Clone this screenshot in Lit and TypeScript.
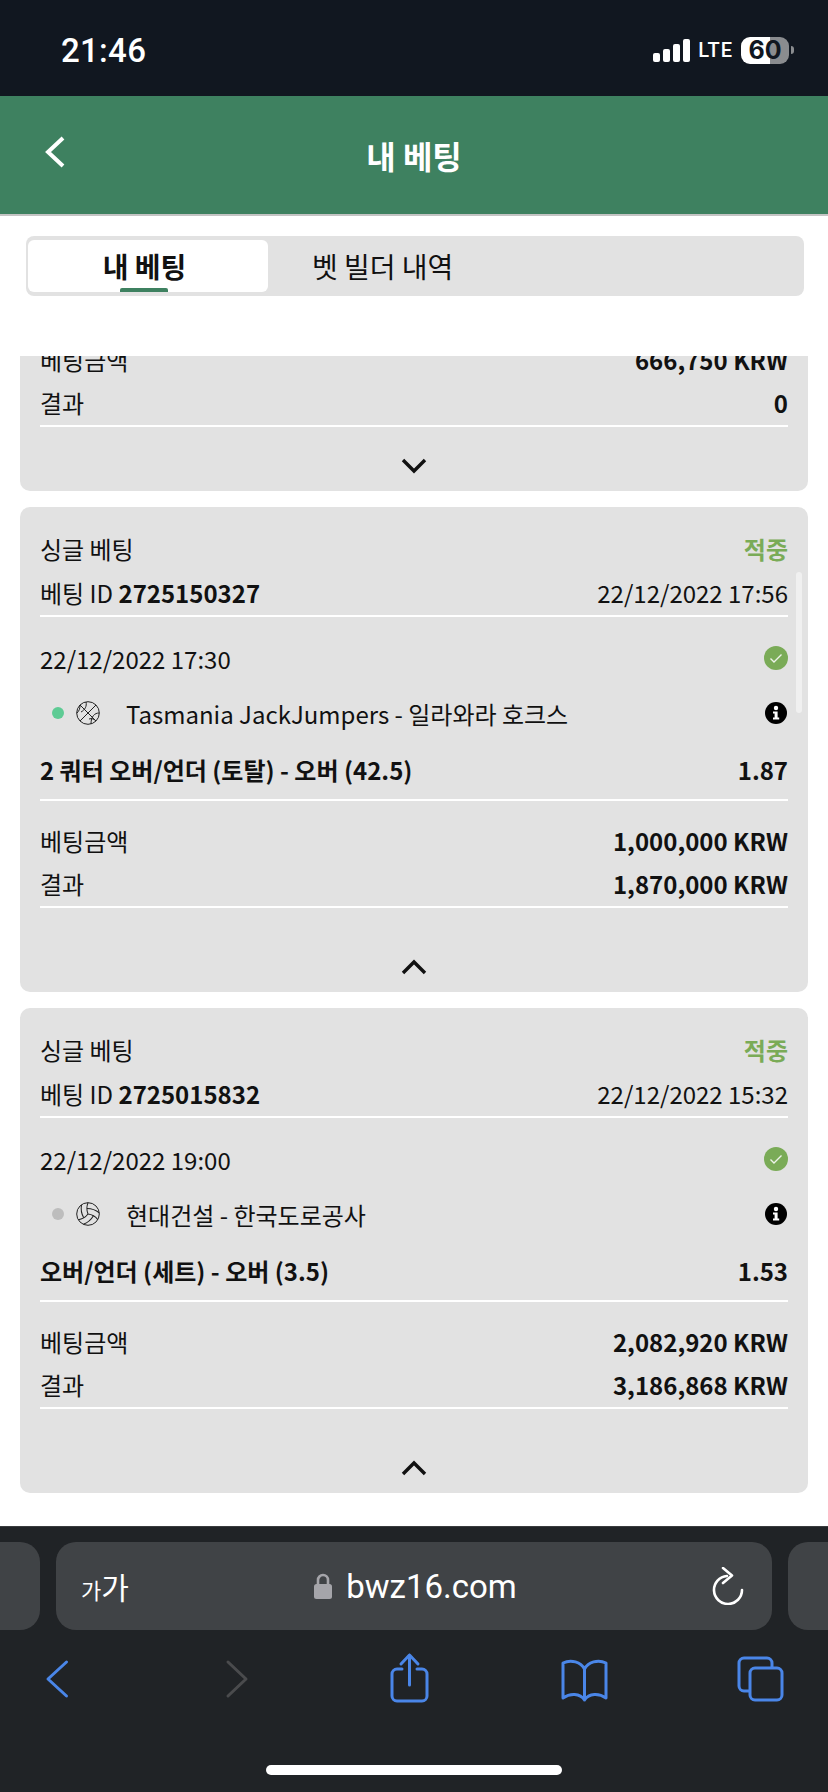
import { LitElement, html, css, svg } from 'lit';
import { customElement } from 'lit/decorators.js';
import { classMap } from 'lit/directives/class-map.js';

interface Bet {
  id: string;
  placed: string;
  date: string;
  live: boolean;
  sport: 'basket' | 'volley';
  match: string;
  market: string;
  odds: string;
  stake: string;
  result: string;
}

const BETS: Bet[] = [
  {
    id: '2725150327',
    placed: '22/12/2022 17:56',
    date: '22/12/2022 17:30',
    live: true,
    sport: 'basket',
    match: 'Tasmania JackJumpers - 일라와라 호크스',
    market: '2 쿼터 오버/언더 (토탈) - 오버 (42.5)',
    odds: '1.87',
    stake: '1,000,000 KRW',
    result: '1,870,000 KRW',
  },
  {
    id: '2725015832',
    placed: '22/12/2022 15:32',
    date: '22/12/2022 19:00',
    live: false,
    sport: 'volley',
    match: '현대건설 - 한국도로공사',
    market: '오버/언더 (세트) - 오버 (3.5)',
    odds: '1.53',
    stake: '2,082,920 KRW',
    result: '3,186,868 KRW',
  },
];

const basket = svg`
  <circle cx="12" cy="12" r="11.3" />
  <path d="M4 4 L20 20 M20 4 L4 20" />
  <path d="M10 1 C11 5 9 9 5 11 M1 12 C3 10 4 8 4 4" />
  <path d="M23 12 C19 12 15 15 15 23 M20 20 C18 18 16 17 13 18" />
`;

const volley = svg`
  <circle cx="12" cy="12" r="11.3" />
  <g transform="translate(12 12) scale(1.13) translate(-12 -12)" stroke-width="0.9">
    <path d="M11.1 7.1a16.55 16.55 0 0 1 10.9 4" />
    <path d="M12 12a12.6 12.6 0 0 1-8.7 5" />
    <path d="M16.8 13.6a16.55 16.55 0 0 1-9 7.5" />
    <path d="M20.7 17a12.8 12.8 0 0 0-8.7-5 13.3 13.3 0 0 1 0-10" />
    <path d="M6.3 3.8a16.55 16.55 0 0 0 1.9 11.5" />
  </g>
`;

@customElement('app-root')
export class AppRoot extends LitElement {
  static styles = css`
    :host {
      display: flex;
      flex-direction: column;
      width: 828px;
      height: 1792px;
      overflow: hidden;
      background: #fff;
      color: #111;
      font-family: 'Noto Sans CJK KR', 'Noto Sans', sans-serif;
      font-size: 24px;
    }

    .status {
      flex: none;
      height: 96px;
      background: #111720;
      color: #fff;
      display: flex;
      align-items: center;
      padding: 4px 34px 0 61px;
      box-sizing: border-box;
      justify-content: space-between;
    }
    .time {
      font: 500 33px Roboto, sans-serif;
      letter-spacing: 0.3px;
    }
    .status-right {
      display: flex;
      align-items: center;
    }
    .signal {
      display: flex;
      align-items: flex-end;
      gap: 3px;
      height: 23px;
      margin-right: 8px;
    }
    .signal i {
      display: block;
      width: 7px;
      background: #fff;
      border-radius: 2px;
    }
    .signal i:nth-child(1) { height: 9px; }
    .signal i:nth-child(2) { height: 13px; }
    .signal i:nth-child(3) { height: 18px; }
    .signal i:nth-child(4) { height: 23px; }
    .lte {
      font: 500 20px Roboto, sans-serif;
      letter-spacing: 1px;
      margin-right: 8px;
    }
    .battery {
      width: 48px;
      height: 27px;
      border-radius: 9px;
      background: linear-gradient(90deg, #fff 60%, #8a8c8f 60%);
      color: #111720;
      font: 700 25px Inter, sans-serif;
      display: flex;
      align-items: center;
      justify-content: center;
    }
    .nub {
      width: 3px;
      height: 8px;
      margin-left: 2px;
      background: #8a8c8f;
      border-radius: 0 3px 3px 0;
    }

    .header {
      flex: none;
      height: 118px;
      background: #3e8160;
      border-bottom: 2px solid #c4c4c4;
      color: #fff;
      display: grid;
      grid-template-columns: 1fr auto 1fr;
      align-items: center;
      padding: 0 45px;
    }
    .header svg {
      width: 20px;
      height: 32px;
      margin-top: -6px;
      display: block;
    }
    .title {
      font-size: 32px;
      font-weight: 700;
    }

    .tabs-wrap {
      flex: none;
      height: 140px;
      padding: 20px 24px 0 26px;
      box-sizing: border-box;
    }
    .tabs {
      height: 60px;
      background: #e2e2e2;
      border-radius: 8px;
      padding: 4px 2px;
      box-sizing: border-box;
      display: flex;
      align-items: stretch;
      font-size: 28px;
    }
    .tab-active {
      position: relative;
      width: 240px;
      box-sizing: border-box;
      padding-right: 7px;
      background: #fff;
      border-radius: 6px;
      font-weight: 700;
      display: flex;
      align-items: center;
      justify-content: center;
    }
    .tab-active::after {
      content: '';
      position: absolute;
      left: 92px;
      bottom: 0;
      width: 48px;
      height: 4px;
      border-radius: 2px 2px 0 0;
      background: #3e8160;
    }
    .tab {
      padding-left: 44px;
      display: flex;
      align-items: center;
    }

    .list {
      position: relative;
      flex: 1;
      min-height: 0;
      overflow: hidden;
      padding: 0 20px;
      display: flex;
      flex-direction: column;
      gap: 16px;
    }
    .card {
      background: #e2e2e2;
      border-radius: 10px;
      padding: 19px 20px 0;
    }
    .card.clipped {
      margin-top: -18px;
      border-radius: 0 0 10px 10px;
      padding-top: 0;
    }
    .row {
      display: flex;
      align-items: center;
      justify-content: space-between;
      height: 44px;
      white-space: nowrap;
    }
    .row.money { height: 43px; }
    .row.gap-date { margin-top: 19px; }
    .row.gap-match { margin-top: 11px; }
    .row.gap-market { margin-top: 12px; }
    .won {
      color: #7aab57;
      font-weight: 700;
    }
    b { font-weight: 700; }
    .rule {
      height: 2px;
      margin-top: 1px;
      background: #fff;
    }
    .rule.market { margin: 8px 0 18px; }
    .match {
      display: flex;
      align-items: center;
    }
    .dot {
      width: 12px;
      height: 12px;
      border-radius: 50%;
      margin: 0 12px;
      background: #bdbdbd;
    }
    .dot.live { background: #5ecb94; }
    .sport {
      width: 24px;
      height: 24px;
      margin-right: 26px;
      display: block;
      fill: none;
      stroke: #222;
      stroke-width: 1;
    }
    .check { width: 24px; height: 24px; display: block; }
    .info { width: 22px; height: 22px; display: block; margin-right: 1px; }
    .foot {
      display: flex;
      justify-content: center;
      padding-top: 51px;
      height: 33px;
    }
    .card.clipped .foot {
      padding-top: 31px;
      height: 33px;
    }
    .foot svg { width: 26px; height: 16px; display: block; }
    .scrollbar {
      position: absolute;
      left: 796px;
      top: 216px;
      width: 6px;
      height: 141px;
      border-radius: 3px;
      background: #f0f0f0;
    }

    .browser {
      flex: none;
      height: 266px;
      background: #202326;
      border-top: 1px solid #3a3c3e;
      box-sizing: border-box;
      padding-top: 15px;
    }
    .url-row {
      display: grid;
      grid-template-columns: 40px 716px 1fr;
      gap: 16px;
      height: 88px;
    }
    .stub {
      background: #404346;
      border-radius: 0 20px 20px 0;
    }
    .stub.right { border-radius: 20px 0 0 20px; }
    .url {
      background: #404346;
      border-radius: 20px;
      color: #fff;
      display: grid;
      grid-template-columns: 1fr auto 1fr;
      align-items: center;
      padding: 0 28px 0 25px;
    }
    .aa { display: flex; align-items: baseline; }
    .aa span:first-child { font-size: 22px; }
    .aa span:last-child { font-size: 30px; }
    .addr {
      display: flex;
      align-items: center;
      gap: 14px;
      margin-left: 6px;
      font: 400 33px Roboto, sans-serif;
    }
    .addr svg { width: 18px; height: 26px; display: block; }
    .reload { justify-self: end; width: 32px; height: 38px; display: block; }
    .toolbar {
      display: flex;
      justify-content: space-between;
      margin-top: 25px;
      padding: 0 43px 0 33px;
    }
    .toolbar svg {
      width: 48px;
      height: 48px;
      display: block;
      overflow: visible;
      fill: none;
      stroke: #4a86e8;
      stroke-width: 3;
      stroke-linecap: round;
      stroke-linejoin: round;
    }
    .toolbar svg.off { stroke: #4a4b4d; }
    .home {
      width: 296px;
      height: 10px;
      margin: 62px auto 0;
      border-radius: 5px;
      background: #fff;
    }
  `;

  private chevron(up: boolean) {
    return html`<svg viewBox="0 0 26 16" fill="none" stroke="#111" stroke-width="3.4">
      <path d=${up ? 'M2 14 L13 3 L24 14' : 'M2 2 L13 13 L24 2'} />
    </svg>`;
  }

  private renderBet(bet: Bet) {
    return html`
      <section class="card">
        <div class="row"><span>싱글 베팅</span><span class="won">적중</span></div>
        <div class="row">
          <span>베팅 ID <b>${bet.id}</b></span><span>${bet.placed}</span>
        </div>
        <div class="rule"></div>
        <div class="row gap-date">
          <span>${bet.date}</span>
          <svg class="check" viewBox="0 0 24 24">
            <circle cx="12" cy="12" r="12" fill="#7aab57" />
            <path d="M6.5 12.5 L10 16 L17.5 8.5" fill="none" stroke="#eef3ea" stroke-width="1.4" />
          </svg>
        </div>
        <div class="row gap-match">
          <div class="match">
            <span class="dot ${classMap({ live: bet.live })}"></span>
            <svg class="sport" viewBox="0 0 24 24">${bet.sport === 'basket' ? basket : volley}</svg>
            <span>${bet.match}</span>
          </div>
          <svg class="info" viewBox="0 0 22 22">
            <circle cx="11" cy="11" r="11" fill="#000" />
            <circle cx="11" cy="6" r="2.2" fill="#fff" />
            <path d="M8 9.5 H12.6 V15.4 H14.2 V17.4 H8 V15.4 H9.6 V11.5 H8 Z" fill="#fff" />
          </svg>
        </div>
        <div class="row gap-market"><b>${bet.market}</b><b>${bet.odds}</b></div>
        <div class="rule market"></div>
        <div class="row money"><span>베팅금액</span><b>${bet.stake}</b></div>
        <div class="row money"><span>결과</span><b>${bet.result}</b></div>
        <div class="rule"></div>
        <div class="foot">${this.chevron(true)}</div>
      </section>
    `;
  }

  render() {
    return html`
      <div class="status">
        <span class="time">21:46</span>
        <div class="status-right">
          <div class="signal"><i></i><i></i><i></i><i></i></div>
          <span class="lte">LTE</span>
          <div class="battery">60</div>
          <div class="nub"></div>
        </div>
      </div>

      <header class="header">
        <svg viewBox="0 0 20 32" fill="none" stroke="#fff" stroke-width="4">
          <path d="M18 2 L3 16 L18 30" />
        </svg>
        <div class="title">내 베팅</div>
      </header>

      <div class="tabs-wrap">
        <div class="tabs">
          <div class="tab-active">내 베팅</div>
          <div class="tab">벳 빌더 내역</div>
        </div>
      </div>

      <main class="list">
        <section class="card clipped">
          <div class="row money"><span>베팅금액</span><b>666,750 KRW</b></div>
          <div class="row money"><span>결과</span><b>0</b></div>
          <div class="rule"></div>
          <div class="foot">${this.chevron(false)}</div>
        </section>
        ${BETS.map((bet) => this.renderBet(bet))}
        <div class="scrollbar"></div>
      </main>

      <footer class="browser">
        <div class="url-row">
          <div class="stub"></div>
          <div class="url">
            <div class="aa"><span>가</span><span>가</span></div>
            <div class="addr">
              <svg viewBox="0 0 18 26">
                <path d="M4 12 V7 a5 5 0 0 1 10 0 V12" fill="none" stroke="#a5a5aa" stroke-width="2.6" />
                <rect x="0" y="11" width="18" height="15" rx="2.5" fill="#a5a5aa" />
              </svg>
              <span>bwz16.com</span>
            </div>
            <svg class="reload" viewBox="0 0 32 38" fill="none" stroke="#fff" stroke-width="2.6" stroke-linecap="round" stroke-linejoin="round">
              <path d="M15 9 A14 14 0 1 0 30 23" />
              <path d="M11 1 L20 8.5 L11 16" />
            </svg>
          </div>
          <div class="stub right"></div>
        </div>
        <nav class="toolbar">
          <svg viewBox="0 0 48 48"><path d="M33.5 7 L15 24 L33.5 41" /></svg>
          <svg class="off" viewBox="0 0 48 48"><path d="M19 7 L37 24 L19 41" /></svg>
          <svg viewBox="0 0 48 48">
            <path d="M17 14 H12 a5 5 0 0 0 -5 5 V41 a5 5 0 0 0 5 5 H37 a5 5 0 0 0 5 -5 V19 a5 5 0 0 0 -5 -5 H32" />
            <path d="M24.5 30 V0 M16 9 L24.5 0 L33 9" />
          </svg>
          <svg viewBox="0 0 48 48">
            <path d="M23.5 14 C20 7 10 4 2 8 V43 C9 38 19 38 23.5 45 C28 38 38 38 45 43 V8 C37 4 27 7 23.5 14 V45" />
          </svg>
          <svg viewBox="0 0 48 48">
            <path d="M12 36 H7 a5 5 0 0 1 -5 -5 V8 a5 5 0 0 1 5 -5 H30 a5 5 0 0 1 5 5 V12" />
            <rect x="13" y="13" width="32" height="32" rx="5" />
          </svg>
        </nav>
        <div class="home"></div>
      </footer>
    `;
  }
}
